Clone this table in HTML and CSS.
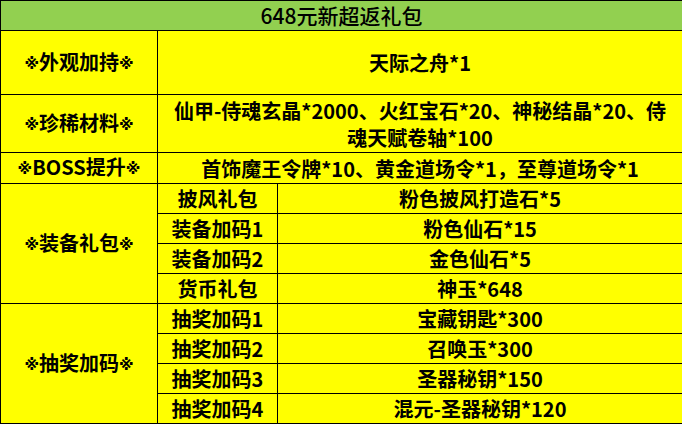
FILE: index.html
```html
<!DOCTYPE html>
<html lang="zh">
<head>
<meta charset="utf-8">
<link rel="stylesheet" href="styles.css">
</head>
<body>
<table class="gift">
  <colgroup>
    <col class="c1">
    <col class="c2">
    <col class="c3">
  </colgroup>
  <tr class="r-head"><td colspan="3" class="head">648元新超返礼包</td></tr>
  <tr class="r-tall"><td class="cat"><span class="mark">※</span>外观加持<span class="mark">※</span></td><td colspan="2">天际之舟*1</td></tr>
  <tr class="r-two"><td class="cat"><span class="mark">※</span>珍稀材料<span class="mark">※</span></td><td colspan="2" class="multi">仙甲-侍魂玄晶*2000、火红宝石*20、神秘结晶*20、侍<br>魂天赋卷轴*100</td></tr>
  <tr class="r"><td class="cat"><span class="mark">※</span>BOSS提升<span class="mark">※</span></td><td colspan="2">首饰魔王令牌*10、黄金道场令*1，至尊道场令*1</td></tr>
  <tr class="r"><td class="cat" rowspan="4"><span class="mark">※</span>装备礼包<span class="mark">※</span></td><td>披风礼包</td><td>粉色披风打造石*5</td></tr>
  <tr class="r"><td>装备加码1</td><td>粉色仙石*15</td></tr>
  <tr class="r"><td>装备加码2</td><td>金色仙石*5</td></tr>
  <tr class="r"><td>货币礼包</td><td>神玉*648</td></tr>
  <tr class="r"><td class="cat" rowspan="4"><span class="mark">※</span>抽奖加码<span class="mark">※</span></td><td>抽奖加码1</td><td>宝藏钥匙*300</td></tr>
  <tr class="r"><td>抽奖加码2</td><td>召唤玉*300</td></tr>
  <tr class="r"><td>抽奖加码3</td><td>圣器秘钥*150</td></tr>
  <tr class="r"><td>抽奖加码4</td><td>混元-圣器秘钥*120</td></tr>
</table>
</body>
</html>
```

FILE: styles.css
```css
html, body {
  margin: 0;
  padding: 0;
  background: #ffffff;
}
.gift {
  border-collapse: collapse;
  table-layout: fixed;
  width: 682px;
  font-family: "Noto Sans CJK SC", "Liberation Sans", sans-serif;
  font-size: 20px;
  font-weight: 700;
  color: #000;
}
.c1 { width: 157px; }
.c2 { width: 120px; }
.c3 { width: 405px; }
.gift td {
  border: 1px solid #000;
  background: #ffff00;
  text-align: center;
  vertical-align: middle;
  padding: 0;
  line-height: 27px;
  white-space: nowrap;
}
.gift td.head {
  background: #92d050;
  font-size: 21px;
  font-weight: 500;
}
.mark {
  font-family: "DejaVu Sans", "Noto Sans CJK SC", sans-serif;
  font-size: 15px;
  font-weight: 700;
  vertical-align: 1px;
}
.r-head { height: 30px; }
.r-tall { height: 64px; }
.r-two { height: 58px; }
.r { height: 30px; }
```
